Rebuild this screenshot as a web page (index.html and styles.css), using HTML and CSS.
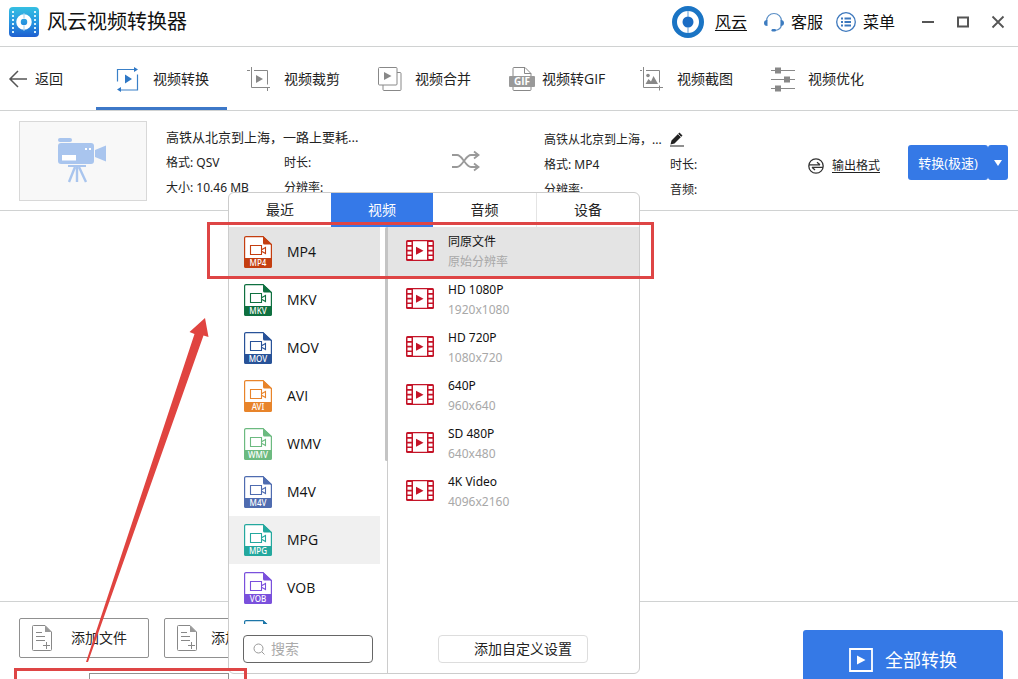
FILE: index.html
```html
<!DOCTYPE html>
<html lang="zh-CN">
<head>
<meta charset="utf-8">
<title>风云视频转换器</title>
<link rel="stylesheet" href="styles.css">
</head>
<body>
<svg class="defs" width="0" height="0" aria-hidden="true">
  <symbol id="file" viewBox="0 0 28 32">
    <path d="M2 .6h17l8.400 8V30a1.400 1.400 0 0 1-1.400 1.400H2A1.400 1.400 0 0 1 .6 30V2A1.400 1.400 0 0 1 2 .6z" fill="#fff" stroke="currentColor" stroke-width="1.200"/>
    <path d="M19 0l9 8.500h-7.500a1.500 1.500 0 0 1-1.500-1.500zM0 22h28v8a2 2 0 0 1-2 2H2a2 2 0 0 1-2-2z" fill="currentColor"/>
    <path d="M6.500 9.500h11v9h-11zM18 13.500l3.500-2v6L18 15.500" fill="none" stroke="currentColor" stroke-width="1.100"/>
  </symbol>
  <symbol id="film" viewBox="0 0 28 21">
    <rect width="28" height="21" rx="1.500" fill="#c41428"/>
    <path d="M7 1.300h14v18.400H7zM1.500 2h4v3H1.500zM1.500 6.700h4v3H1.500zM1.500 11.400h4v3H1.500zM1.500 16h4v3H1.500zM22.500 2h4v3h-4zM22.500 6.700h4v3h-4zM22.500 11.400h4v3h-4zM22.500 16h4v3h-4z" fill="#fff"/>
    <path d="M10 6.800l7.500 4-7.500 4z" fill="#c41428"/>
  </symbol>
  <symbol id="doc" viewBox="0 0 20 26">
    <path d="M1.500.5H13l6.500 6.500v17.500a1 1 0 0 1-1 1h-17a1 1 0 0 1-1-1v-23a1 1 0 0 1 1-1zM4 7.500h6M4 11.500h9M4 15.500h9M14.500 17v7M11 20.500h7" fill="none" stroke="#888" />
    <path d="M13 .5l6.500 6.500H13z" fill="#999"/>
  </symbol>
</svg>

<header class="titlebar">
  <svg class="logo" width="30" height="30" viewBox="0 0 30 30">
    <defs><linearGradient id="lg" x1="0" y1="0" x2="0" y2="1"><stop offset="0" stop-color="#35bfe2"/><stop offset=".5" stop-color="#2797e0"/><stop offset="1" stop-color="#1e5fd0"/></linearGradient></defs>
    <rect width="30" height="30" rx="4" fill="url(#lg)"/>
    <path d="M4 4v24M26 4v24" stroke="#d8f2fb" stroke-width="2" stroke-dasharray="2 2"/>
    <circle cx="15" cy="15" r="5.500" fill="none" stroke="#fff" stroke-width="4.500"/>
    <path d="M15 6v5M15 19v5" stroke="#9fd0ee" stroke-width="1"/>
  </svg>
  <h1 class="app-name">风云视频转换器</h1>
  <nav class="account">
    <a class="user" href="#">
      <svg width="32" height="32" viewBox="0 0 32 32"><circle cx="16" cy="16" r="13.500" fill="#fff" stroke="#1a74c4" stroke-width="5"/><circle cx="16" cy="16" r="5.500" fill="#1a6cc4"/><path d="M16 5v6M16 21v6" stroke="#5c9bd6"/></svg>
      <span class="underlined">风云</span></a>
    <a class="service" href="#">
      <svg width="20" height="20" viewBox="0 0 20 20"><path d="M2.500 9a7.500 7.500 0 0 1 15 0v3c0 4-3 6-6.500 6.500" fill="none" stroke="#5b8fc6" stroke-width="1.200"/><path d="M3.500 8v6C1 14 0 13 0 11s1-3 3.500-3zM16.500 8v6c2.500 0 3.500-1 3.500-3s-1-3-3.500-3z" fill="#3d7cc0"/><rect x="7.500" y="17" width="4.500" height="2.500" rx="1.200" fill="#3d7cc0"/></svg>
      客服</a>
    <a class="menu" href="#">
      <svg width="20" height="20" viewBox="0 0 20 20" fill="none" stroke="#3d78bd"><circle cx="10" cy="10" r="9.300" stroke-width="1.300"/><path d="M5 6.500h2M5 10h2M5 13.500h2M8.500 6.500H15M8.500 10H15M8.500 13.500H15" stroke-width="1.800"/></svg>
      菜单</a>
  </nav>
  <div class="window-controls">
    <button type="button" aria-label="最小化"><svg width="12" height="12"><path d="M0 6h12" stroke="#555" stroke-width="2"/></svg></button>
    <button type="button" aria-label="最大化"><svg width="12" height="12"><path d="M1 1.500h10v9H1z" fill="none" stroke="#555" stroke-width="2"/></svg></button>
    <button type="button" aria-label="关闭"><svg width="12" height="12"><path d="M.5 .5l11 11M11.500 .5l-11 11" stroke="#555" stroke-width="1.800"/></svg></button>
  </div>
</header>

<nav class="toolbar">
  <a class="back" href="#"><svg width="18" height="18" viewBox="0 0 18 18"><path d="M18 9H1M9 1L1 9l8 8" fill="none" stroke="#555" stroke-width="1.500"/></svg>返回</a>
  <a class="tool active" href="#"><svg width="24" height="24" viewBox="0 0 24 24"><path d="M19 2H2v12M5 22.500h17V7" transform="translate(-.5 .5)" fill="none" stroke="#3a80c8" stroke-width="1.200"/><path d="M18 0l4 2.500L18 5zM5 20l-4 2.500L5 25zM9 7.500l7 4.500-7 4.500z" fill="#2f78c6"/></svg>视频转换</a>
  <a class="tool" href="#"><svg width="24" height="24" viewBox="0 0 24 24"><path d="M4.500 0v20.500H18M0 3.500h3M7 3.500h13.500v14M20.500 20v4M18 20.500h5" fill="none" stroke="#888"/><path d="M9 8l7 4-7 4z" fill="#888"/></svg>视频裁剪</a>
  <a class="tool" href="#"><svg width="24" height="24" viewBox="0 0 24 24"><path d="M5 18v4.500a1 1 0 0 0 1 1h16a1 1 0 0 0 1-1V6.500a1 1 0 0 0-1-1h-3" fill="none" stroke="#888"/><rect x=".5" y=".5" width="18.500" height="17.500" rx="1" fill="#fff" stroke="#888"/><path d="M6 5l7.500 4L6 13z" fill="#888"/></svg>视频合并</a>
  <a class="tool gif" href="#"><svg width="26" height="24" viewBox="0 0 26 24"><path d="M4 10V1.500a1 1 0 0 1 1-1h11l6 6V10M4 20v2.500a1 1 0 0 0 1 1h16a1 1 0 0 0 1-1V20M15.500.5v6H22" fill="none" stroke="#888"/><rect y="9" width="26" height="11" rx="1" fill="#999"/><text class="gif-label" x="13" y="18" text-anchor="middle">GIF</text></svg>视频转GIF</a>
  <a class="tool" href="#"><svg width="24" height="24" viewBox="0 0 24 24"><path d="M3.500 0v20.500H16M0 3.500h2M6 3.500h13.500v12M15 20.500h8M19.500 18.500v5" fill="none" stroke="#888"/><circle cx="8" cy="8.500" r="1.800" fill="#888"/><path d="M5.500 17l3-5 2.500 2.500L13.500 9l4.500 8z" fill="#888"/></svg>视频截图</a>
  <a class="tool" href="#"><svg width="24" height="24" viewBox="0 0 24 24"><path d="M0 3.500h24M0 12.500h24M0 21.500h24" stroke="#888"/><path d="M4 .5h6v6H4zM13 9.500h6v6h-6zM4 18.500h6v6H4z" fill="#888"/></svg>视频优化</a>
</nav>

<section class="task">
  <div class="thumb">
    <svg width="50" height="45" viewBox="0 0 50 45"><g fill="#a9c5ee"><rect x="0" y="0" width="14" height="4" rx="2"/><rect x="0" y="5" width="36" height="21" rx="3"/><path d="M37 12l11-4.500v16L37 19zM10 27h18v2H10z"/></g><path d="M4 17h14v5.500H4zM27 10h2v2h-2zM31 10h2v2h-2z" fill="#fff"/><path d="M17 29l-6 15M19 29v15M21 29l7 15" stroke="#a9c5ee" stroke-width="2.400"/></svg>
  </div>
  <div class="info source">
    <strong class="name">高铁从北京到上海，一路上要耗...</strong>
    <span>格式: QSV</span><span>时长:</span>
    <span>大小: 10.46 MB</span><span>分辨率:</span>
  </div>
  <svg class="shuffle" width="28" height="20" viewBox="0 0 28 20"><path d="M0 4h5c3 0 4.500 2.500 7 6s4 6 7 6h6M0 16h5c3 0 4.500-2.500 7-6s4-6 7-6h6M22 .5L26.500 4 22 7.500M22 12.500l4.500 3.500-4.500 3.500" fill="none" stroke="#999" stroke-width="1.800"/></svg>
  <div class="info target">
    <strong class="name">高铁从北京到上海，...
      <button type="button" aria-label="重命名"><svg width="14" height="16" viewBox="0 0 14 16"><path d="M1.500 9.500l8-8 3 3-8 8-4 1zM0 14.500h14v1H0z" fill="#222"/><path d="M8 3l3 3" stroke="#fff" stroke-width=".7"/></svg></button></strong>
    <span>格式: MP4</span><span>时长:</span>
    <span>分辨率:</span><span>音频:</span>
  </div>
  <a class="output" href="#"><svg width="16" height="16" viewBox="0 0 16 16" fill="none" stroke="#333" stroke-width="1.300"><circle cx="8" cy="8" r="7.200"/><path d="M1 6.800h11M15 9.300H4M9 4.200l3 2.600M7 12L4 9.300"/></svg><span>输出格式</span></a>
  <div class="convert">
    <button type="button" class="convert-main">转换(极速)</button>
    <button type="button" class="convert-more" aria-label="更多"><svg width="8" height="6"><path d="M0 0h8L4 6z" fill="#fff"/></svg></button>
  </div>
</section>

<main class="workspace"></main>

<footer class="bottom">
  <div class="adders">
    <button type="button" class="add"><svg width="20" height="26"><use href="#doc"/></svg>添加文件</button>
    <button type="button" class="add folder"><svg width="20" height="26"><use href="#doc"/></svg>添加文件夹</button>
    <select class="preset" aria-label="输出格式"></select>
  </div>
  <button type="button" class="all"><svg width="24" height="24" viewBox="0 0 24 24"><path d="M1 1h22v22H1z" fill="none" stroke="#fff" stroke-width="1.800"/><path d="M8 7.500l8.500 4.500L8 16.500z" fill="#fff"/></svg>全部转换</button>
</footer>

<div class="popup">
  <div class="tabs">
    <button type="button">最近</button><button type="button" class="on">视频</button><button type="button">音频</button><button type="button">设备</button>
  </div>
  <div class="columns">
    <div class="formats">
      <ul class="list">
        <li class="mp4 selected"><span class="ico"><svg><use href="#file"/></svg><b>MP4</b></span>MP4</li>
        <li class="mkv"><span class="ico"><svg><use href="#file"/></svg><b>MKV</b></span>MKV</li>
        <li class="mov"><span class="ico"><svg><use href="#file"/></svg><b>MOV</b></span>MOV</li>
        <li class="avi"><span class="ico"><svg><use href="#file"/></svg><b>AVI</b></span>AVI</li>
        <li class="wmv"><span class="ico"><svg><use href="#file"/></svg><b>WMV</b></span>WMV</li>
        <li class="m4v"><span class="ico"><svg><use href="#file"/></svg><b>M4V</b></span>M4V</li>
        <li class="mpg hover"><span class="ico"><svg><use href="#file"/></svg><b>MPG</b></span>MPG</li>
        <li class="vob"><span class="ico"><svg><use href="#file"/></svg><b>VOB</b></span>VOB</li>
        <li class="next"><span class="ico"><svg><use href="#file"/></svg></span></li>
      </ul>
      <i class="scroll"></i>
      <label class="search"><svg width="12" height="12" viewBox="0 0 12 12" fill="none" stroke="#999"><circle cx="5.500" cy="5.500" r="4.500"/><path d="M9 9l2.500 2.500"/></svg><input type="text" placeholder="搜索" aria-label="搜索"></label>
    </div>
    <div class="sizes">
      <ul class="list">
        <li class="selected"><svg><use href="#film"/></svg><p>同原文件<small>原始分辨率</small></p></li>
        <li><svg><use href="#film"/></svg><p>HD 1080P<small>1920x1080</small></p></li>
        <li><svg><use href="#film"/></svg><p>HD 720P<small>1080x720</small></p></li>
        <li><svg><use href="#film"/></svg><p>640P<small>960x640</small></p></li>
        <li><svg><use href="#film"/></svg><p>SD 480P<small>640x480</small></p></li>
        <li><svg><use href="#film"/></svg><p>4K Video<small>4096x2160</small></p></li>
      </ul>
      <button type="button" class="custom">添加自定义设置</button>
    </div>
  </div>
</div>

<svg class="marks" aria-hidden="true">
  <g fill="none" stroke="#de4545" stroke-width="3"><rect x="208.500" y="223.500" width="444" height="54"/><rect x="15.500" y="669.500" width="230" height="40"/></g>
  <path d="M86 662l108.500-328-5-2L205 318l3.500 19-5-1.500L88 662z" fill="#e04440"/>
</svg>
</body>
</html>
```
FILE: styles.css
```css
* { box-sizing: border-box; }
body {
  margin: 0;
  height: 100vh;
  overflow: hidden;
  position: relative;
  display: flex;
  flex-direction: column;
  background: #fff;
  color: #222;
  font: 14px/20px "Open Sans", "Noto Sans CJK SC", sans-serif;
}
a { color: inherit; text-decoration: none; }
button { font: inherit; color: inherit; border: 0; padding: 0; background: none; }
ul, p, h1 { margin: 0; padding: 0; list-style: none; }
svg { flex: none; display: block; overflow: visible; }
.defs { position: absolute; }

.titlebar {
  flex: none;
  display: flex;
  align-items: center;
  height: 47px;
  padding: 0 14px 2px 9px;
  border-bottom: 1px solid #d0d2d2;
}
.app-name { margin-left: 8px; font-size: 20px; font-weight: 400; color: #111; }
.account { margin-left: auto; display: flex; align-items: center; font-size: 16px; color: #111; }
.account a { display: flex; align-items: center; }
.user { gap: 11px; }
.underlined { text-decoration: underline; text-underline-offset: 2px; }
.service { margin-left: 17px; gap: 7px; }
.menu { margin-left: 13px; gap: 7px; }
.window-controls { display: flex; gap: 23px; margin-left: 27px; }

.toolbar {
  flex: none;
  display: flex;
  height: 64px;
  border-bottom: 1px solid #d0d2d2;
}
.back { display: flex; align-items: center; gap: 8px; width: 96px; padding-left: 9px; }
.tool {
  display: flex;
  align-items: center;
  gap: 13px;
  width: 131px;
  padding-left: 20px;
  white-space: nowrap;
  border: 0 solid transparent;
  border-width: 3px 0;
}
.tool.active { border-bottom-color: #3d78c8; }
.tool.gif { gap: 7px; }
.gif-label { font: bold 10px "Open Sans", sans-serif; fill: #fff; }

.task {
  flex: none;
  display: flex;
  align-items: center;
  height: 100px;
  padding: 0 10px 0 19px;
  border-bottom: 1px solid #d0d2d2;
  font-size: 12px;
}
.thumb {
  flex: none;
  display: flex;
  align-items: center;
  justify-content: center;
  width: 128px;
  height: 80px;
  background: #f8f8f8;
  border: 1px solid #d8d8d8;
}
.info {
  flex: none;
  display: grid;
  grid-template-rows: repeat(3, 25px);
  font-family: "Noto Sans", "Noto Sans CJK SC", sans-serif;
  line-height: 25px;
  white-space: nowrap;
}
.name { grid-column: 1 / 3; display: flex; align-items: center; gap: 8px; font-weight: 400; }
.source { width: 286px; margin: 3px 0 0 19px; grid-template-columns: 118px 1fr; }
.source .name { font-size: 13px; }
.target { width: 200px; margin: 7px 0 0 64px; grid-template-columns: 126px 1fr; }
.output { display: flex; align-items: center; gap: 8px; margin: 10px 0 0 auto; }
.output span { text-decoration: underline; text-underline-offset: 2px; }
.convert { display: flex; margin-left: 28px; height: 35px; margin-top: 4px; color: #fff; }
.convert button { background: #3579e6; }
.convert .convert-main { width: 80px; border-radius: 3px; font-size: 13px; }
.convert .convert-more { display: flex; align-items: center; justify-content: center; width: 20px; border-radius: 3px; }

.workspace { flex: 1; }

.bottom {
  flex: none;
  display: flex;
  justify-content: space-between;
  height: 78px;
  overflow: hidden;
  padding: 16px 15px 0 19px;
  border-top: 1px solid #d0d2d2;
}
.adders { display: grid; grid-template-columns: 130px 140px; grid-auto-rows: 40px; gap: 15px; }
.add { display: flex; align-items: center; gap: 19px; padding-left: 12px; border: 1px solid #909090; border-radius: 2px; white-space: nowrap; }
.add.folder { gap: 14px; }
.preset { grid-column: 1 / 3; width: 140px; margin-left: 70px; border: 1px solid #909090; background: #fff; appearance: none; }
.all {
  display: flex;
  align-items: center;
  justify-content: center;
  gap: 12px;
  width: 200px;
  height: 60px;
  margin-top: 12px;
  border-radius: 3px;
  background: #3579e6;
  color: #fff;
  font-size: 18px;
}

.popup {
  position: absolute;
  left: 228px;
  top: 192px;
  width: 412px;
  height: 482px;
  display: flex;
  flex-direction: column;
  background: #fff;
  border: 1px solid #ccc;
  border-radius: 6px;
}
.tabs { display: grid; grid-template-columns: 102px 102px 1fr 1fr; height: 34px; }
.tabs .on { background: #3579e8; color: #fff; }
.tabs button:last-child { border-left: 1px solid #e4e4e4; }
.columns { flex: 1; display: flex; min-height: 0; }
.formats { position: relative; width: 159px; border-right: 1px solid #ccc; display: flex; flex-direction: column; }
.formats .list { height: 397px; overflow: hidden; margin-right: 7px; }
.list li { display: flex; align-items: center; height: 48px; }
.list li:first-child { height: 49px; }
.formats li { gap: 15px; padding-left: 15px; color: #111; }
.selected { background: #e4e4e4; }
.hover { background: #f0f0f0; }
.ico { position: relative; width: 28px; height: 32px; }
.ico svg { width: 28px; height: 32px; }
.ico b { position: absolute; left: 0; right: 0; bottom: 0; font-family: "Noto Sans", sans-serif; font-size: 8px; line-height: 10px; font-weight: 500; text-align: center; color: #fff; }
.mp4 .ico { color: #c43e10; }
.mkv .ico { color: #0f7040; }
.mov .ico { color: #285298; }
.avi .ico { color: #e8842a; }
.wmv .ico { color: #6cba80; }
.m4v .ico { color: #4f6cb0; }
.mpg .ico { color: #24a89e; }
.vob .ico { color: #7a50dc; }
.next .ico { color: #1c76a8; }
.scroll { position: absolute; right: -1px; top: 0; width: 3px; height: 234px; background: #c4c4c4; border-radius: 2px; }
.search {
  display: flex;
  align-items: center;
  gap: 6px;
  width: 130px;
  height: 28px;
  margin: 11px 0 0 14px;
  padding: 0 9px;
  border: 1px solid #666;
  border-radius: 4px;
}
.search input { width: 80px; border: 0; padding: 0; outline: 0; font: inherit; background: none; }
.search input::placeholder { color: #aaa; }
.sizes { flex: 1; display: flex; flex-direction: column; justify-content: space-between; }
.sizes li { gap: 14px; padding-left: 18px; font-family: "Noto Sans", "Noto Sans CJK SC", sans-serif; font-size: 12px; color: #111; }
.sizes li svg { width: 28px; height: 21px; margin-bottom: 3px; }
.sizes small { display: block; font-size: 12px; color: #a8a8a8; }
.custom { width: 150px; height: 28px; margin: 0 0 10px 50px; padding-left: 20px; border: 1px solid #ddd; border-radius: 4px; }

.marks { position: absolute; left: 0; top: 0; width: 100%; height: 100%; pointer-events: none; }
```
